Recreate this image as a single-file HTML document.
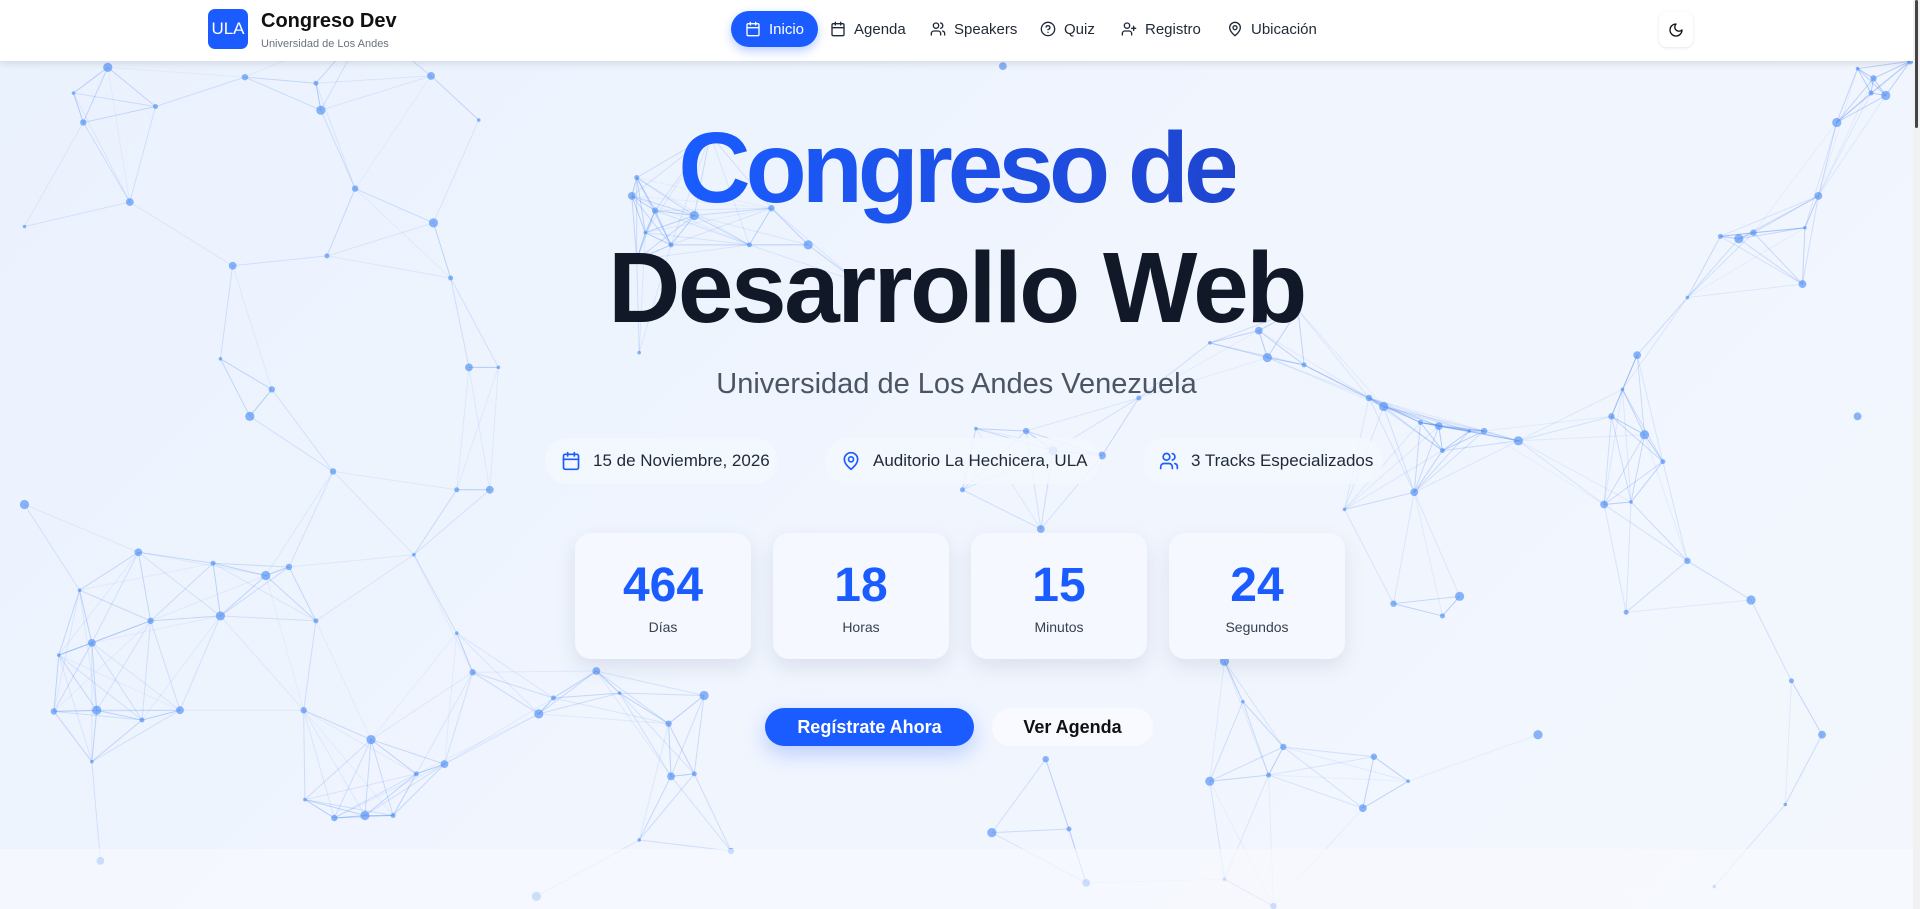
<!DOCTYPE html>
<html><head><meta charset="utf-8">
<style>
*{margin:0;padding:0;box-sizing:border-box}
html,body{width:1920px;height:909px;overflow:hidden}
body{font-family:"Liberation Sans",sans-serif;background:linear-gradient(135deg,#eaf2fe 0%,#f0f5fe 50%,#f3f7fd 100%);position:relative;color:#111827}
#bg{position:absolute;left:0;top:0;width:1920px;height:909px}
.band{position:absolute;left:0;top:849px;width:1913px;height:60px;background:rgba(248,250,253,.6)}
nav{position:absolute;left:0;top:0;width:1913px;height:61px;background:#fff;box-shadow:0 2px 8px rgba(0,0,0,.12);z-index:5}
.logo{position:absolute;left:208px;top:9px;width:40px;height:40px;border-radius:7px;background:#1a5cff;color:#fff;font-size:17px;display:flex;align-items:center;justify-content:center}
.brand{position:absolute;left:261px;top:10px;font-size:20px;font-weight:bold;color:#111}
.sub{position:absolute;left:261px;top:38px;font-size:11px;color:#6b7280}
.nl{position:absolute;top:11px;height:36px;display:flex;align-items:center;font-size:15px;color:#1f2937;gap:8px}
.nl svg{width:16px;height:16px;fill:none;stroke:currentColor;stroke-width:2;stroke-linecap:round;stroke-linejoin:round}
.act{background:#1a5cff;color:#fff;border-radius:18px;padding:0 14px;box-shadow:0 4px 10px rgba(26,92,255,.3)}
.moon{position:absolute;left:1659px;top:12px;width:34px;height:35px;border-radius:8px;background:#fff;box-shadow:0 1px 3px rgba(0,0,0,.1);display:flex;align-items:center;justify-content:center}
.scroll{position:absolute;left:1913px;top:0;width:7px;height:909px;background:#f1f1f1;z-index:6}
.scroll div{width:3px;margin-left:2px;height:128px;background:#444;border-radius:2px}
h1{position:absolute;left:0;width:1913px;text-align:center;font-size:100px;font-weight:bold;line-height:1}
.l1{letter-spacing:-5px}
.l2{letter-spacing:-2.5px}
.l1 span{background:linear-gradient(90deg,#1a5cff,#1f45cf);-webkit-background-clip:text;background-clip:text;color:transparent}
.h2{position:absolute;left:0;width:1913px;text-align:center;top:368px;font-size:29px;color:#4b5563}
.pill{position:absolute;top:438px;height:46px;border-radius:23px;background:rgba(243,247,254,.85);display:flex;align-items:center;padding-left:16px;gap:12px;font-size:17px;color:#1f2937}
.pill svg{width:20px;height:20px;fill:none;stroke:#1a5cff;stroke-width:2;stroke-linecap:round;stroke-linejoin:round}
.card{position:absolute;top:533px;width:176px;height:126px;border-radius:16px;background:#f5f8fe;box-shadow:0 8px 20px rgba(30,50,90,.1);text-align:center}
.card b{display:block;margin-top:29px;font-size:48px;color:#1a5cff;line-height:1}
.card span{display:block;margin-top:9px;font-size:14px;color:#374151}
.btn{position:absolute;top:708px;height:38px;border-radius:19px;display:flex;align-items:center;justify-content:center;font-size:18px;font-weight:bold}
</style></head><body>
<svg id="bg" viewBox="0 0 1920 909"></svg>
<div class="band"></div>
<nav>
<div class="logo">ULA</div>
<div class="brand">Congreso Dev</div>
<div class="sub">Universidad de Los Andes</div>
<div class="nl act" style="left:731px"><svg viewBox="0 0 24 24"><rect x="3" y="4" width="18" height="18" rx="2"/><path d="M16 2v4M8 2v4M3 10h18"/></svg>Inicio</div>
<div class="nl" style="left:830px"><svg viewBox="0 0 24 24"><rect x="3" y="4" width="18" height="18" rx="2"/><path d="M16 2v4M8 2v4M3 10h18"/></svg>Agenda</div>
<div class="nl" style="left:930px"><svg viewBox="0 0 24 24"><path d="M16 21v-2a4 4 0 0 0-4-4H6a4 4 0 0 0-4 4v2"/><circle cx="9" cy="7" r="4"/><path d="M22 21v-2a4 4 0 0 0-3-3.9M16 3.1a4 4 0 0 1 0 7.8"/></svg>Speakers</div>
<div class="nl" style="left:1040px"><svg viewBox="0 0 24 24"><circle cx="12" cy="12" r="10"/><path d="M9.1 9a3 3 0 0 1 5.8 1c0 2-3 3-3 3M12 17h.01"/></svg>Quiz</div>
<div class="nl" style="left:1121px"><svg viewBox="0 0 24 24"><path d="M16 21v-2a4 4 0 0 0-4-4H6a4 4 0 0 0-4 4v2"/><circle cx="9" cy="7" r="4"/><path d="M19 8v6M22 11h-6"/></svg>Registro</div>
<div class="nl" style="left:1227px"><svg viewBox="0 0 24 24"><path d="M20 10c0 6-8 12-8 12s-8-6-8-12a8 8 0 0 1 16 0Z"/><circle cx="12" cy="10" r="3"/></svg>Ubicación</div>
<div class="moon"><svg viewBox="0 0 24 24" width="16" height="16" fill="none" stroke="#111" stroke-width="2" stroke-linecap="round" stroke-linejoin="round"><path d="M12 3a6 6 0 0 0 9 9 9 9 0 1 1-9-9Z"/></svg></div>
</nav>
<div class="scroll"><div></div></div>
<h1 class="l1" style="top:118px"><span>Congreso de</span></h1>
<h1 class="l2" style="top:238px">Desarrollo Web</h1>
<div class="h2">Universidad de Los Andes Venezuela</div>
<div class="pill" style="left:545px;width:233px"><svg viewBox="0 0 24 24"><rect x="3" y="4" width="18" height="18" rx="2"/><path d="M16 2v4M8 2v4M3 10h18"/></svg>15 de Noviembre, 2026</div>
<div class="pill" style="left:825px;width:275px"><svg viewBox="0 0 24 24"><path d="M20 10c0 6-8 12-8 12s-8-6-8-12a8 8 0 0 1 16 0Z"/><circle cx="12" cy="10" r="3"/></svg>Auditorio La Hechicera, ULA</div>
<div class="pill" style="left:1143px;width:240px"><svg viewBox="0 0 24 24"><path d="M16 21v-2a4 4 0 0 0-4-4H6a4 4 0 0 0-4 4v2"/><circle cx="9" cy="7" r="4"/><path d="M22 21v-2a4 4 0 0 0-3-3.9M16 3.1a4 4 0 0 1 0 7.8"/></svg>3 Tracks Especializados</div>
<div class="card" style="left:575px"><b>464</b><span>Días</span></div>
<div class="card" style="left:773px"><b>18</b><span>Horas</span></div>
<div class="card" style="left:971px"><b>15</b><span>Minutos</span></div>
<div class="card" style="left:1169px"><b>24</b><span>Segundos</span></div>
<div class="btn" style="left:765px;width:209px;background:#1a5cff;color:#fff;box-shadow:0 8px 20px rgba(26,92,255,.25)">Regístrate Ahora</div>
<div class="btn" style="left:992px;width:161px;background:#f8faff;color:#111">Ver Agenda</div>
<script>
var P=[[60,76],[68,100],[88,55],[127,87],[106,165],[20,185],[200,63],[262,90],[258,68],[352,62],[391,98],[290,154],[354,182],[267,209],[190,217],[180,293],[222,318],[204,340],[368,227],[383,300],[407,300],[272,385],[20,412],[373,400],[400,400],[338,453],[236,463],[217,470],[174,460],[113,451],[65,482],[123,507],[180,503],[258,507],[75,525],[48,535],[44,581],[79,580],[116,588],[147,580],[75,622],[248,580],[303,604],[340,632],[363,624],[249,653],[273,668],[298,666],[321,666],[82,703],[373,517],[386,549],[440,583],[452,570],[487,548],[506,566],[546,591],[575,568],[567,632],[548,634],[522,686],[597,695],[438,732],[520,145],[516,160],[527,190],[535,172],[567,176],[548,200],[520,212],[522,288],[630,170],[660,200],[612,200],[819,54],[1517,56],[1530,64],[1540,78],[1528,76],[1485,160],[1474,186],[1432,190],[1420,195],[1405,193],[1472,232],[1378,243],[1060,253],[1035,292],[1065,298],[1028,270],[988,280],[1118,325],[1130,332],[1160,345],[1175,348],[1200,352],[1212,352],[1240,360],[1178,368],[1155,402],[1098,416],[1138,493],[1192,487],[1178,503],[1337,290],[1325,318],[1316,340],[1343,355],[1358,377],[1310,412],[1332,410],[1378,458],[1430,490],[1328,500],[1517,340],[797,350],[838,352],[860,368],[786,400],[850,432],[1015,573],[1048,610],[988,638],[1036,633],[1113,660],[1150,638],[1122,618],[1256,600],[1463,556],[1488,600],[1458,657],[854,620],[810,680],[873,677],[887,721],[1000,718],[1040,740],[1000,540],[930,325],[900,372],[1400,724],[1560,50],[1500,100],[300,20],[700,230],[580,110]];
var s=1.2245,h='';
for(var i=0;i<P.length;i++)for(var j=i+1;j<P.length;j++){var dx=P[i][0]-P[j][0],dy=P[i][1]-P[j][1],d=Math.sqrt(dx*dx+dy*dy);if(d<115){h+='<line x1="'+P[i][0]*s+'" y1="'+P[i][1]*s+'" x2="'+P[j][0]*s+'" y2="'+P[j][1]*s+'" stroke="#3b7bf0" stroke-opacity="'+(0.35*(1-d/115)+0.06).toFixed(2)+'" stroke-width="1"/>';}}
for(var i=0;i<P.length;i++){var r=1.8+((i*7)%5)*0.7;h+='<circle cx="'+P[i][0]*s+'" cy="'+P[i][1]*s+'" r="'+r+'" fill="#4f8ff5" fill-opacity="0.65"/>';}
document.getElementById('bg').innerHTML=h;
</script>
</body></html>
